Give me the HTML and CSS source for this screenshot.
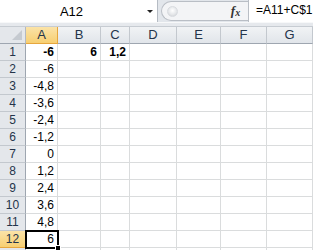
FILE: index.html
```html
<!DOCTYPE html>
<html lang="en">
<head>
  <meta charset="UTF-8" />
  <title>Sheet</title>
  <link rel="stylesheet" href="styles.css">
</head>
<body>
  <div class="topbar">
    <div class="namebox">
      <span class="name">A12</span>
      <span class="arrow"></span>
    </div>
    <div class="pill">
      <span class="knob"></span>
      <span class="fx"><i>f</i><i class="x">x</i></span>
    </div>
    <div class="formula">=A11+C$1</div>
  </div>
  <div class="strip"></div>

  <div class="sheet">
    <div class="corner"><span class="tri"></span></div>
    <div class="colhead sel">A</div>
    <div class="colhead">B</div>
    <div class="colhead">C</div>
    <div class="colhead">D</div>
    <div class="colhead">E</div>
    <div class="colhead">F</div>
    <div class="colhead">G</div>

    <div class="rowhead">1</div>
    <div class="cell bold">-6</div><div class="cell bold">6</div><div class="cell bold">1,2</div>
    <div class="cell"></div><div class="cell"></div><div class="cell"></div><div class="cell"></div>

    <div class="rowhead">2</div>
    <div class="cell">-6</div><div class="cell"></div><div class="cell"></div>
    <div class="cell"></div><div class="cell"></div><div class="cell"></div><div class="cell"></div>

    <div class="rowhead">3</div>
    <div class="cell">-4,8</div><div class="cell"></div><div class="cell"></div>
    <div class="cell"></div><div class="cell"></div><div class="cell"></div><div class="cell"></div>

    <div class="rowhead">4</div>
    <div class="cell">-3,6</div><div class="cell"></div><div class="cell"></div>
    <div class="cell"></div><div class="cell"></div><div class="cell"></div><div class="cell"></div>

    <div class="rowhead">5</div>
    <div class="cell">-2,4</div><div class="cell"></div><div class="cell"></div>
    <div class="cell"></div><div class="cell"></div><div class="cell"></div><div class="cell"></div>

    <div class="rowhead">6</div>
    <div class="cell">-1,2</div><div class="cell"></div><div class="cell"></div>
    <div class="cell"></div><div class="cell"></div><div class="cell"></div><div class="cell"></div>

    <div class="rowhead">7</div>
    <div class="cell">0</div><div class="cell"></div><div class="cell"></div>
    <div class="cell"></div><div class="cell"></div><div class="cell"></div><div class="cell"></div>

    <div class="rowhead">8</div>
    <div class="cell">1,2</div><div class="cell"></div><div class="cell"></div>
    <div class="cell"></div><div class="cell"></div><div class="cell"></div><div class="cell"></div>

    <div class="rowhead">9</div>
    <div class="cell">2,4</div><div class="cell"></div><div class="cell"></div>
    <div class="cell"></div><div class="cell"></div><div class="cell"></div><div class="cell"></div>

    <div class="rowhead">10</div>
    <div class="cell">3,6</div><div class="cell"></div><div class="cell"></div>
    <div class="cell"></div><div class="cell"></div><div class="cell"></div><div class="cell"></div>

    <div class="rowhead">11</div>
    <div class="cell">4,8</div><div class="cell"></div><div class="cell"></div>
    <div class="cell"></div><div class="cell"></div><div class="cell"></div><div class="cell"></div>

    <div class="rowhead sel">12</div>
    <div class="cell active">6<span class="handle"></span></div><div class="cell"></div><div class="cell"></div>
    <div class="cell"></div><div class="cell"></div><div class="cell"></div><div class="cell"></div>

    <div class="rowhead"></div>
    <div class="cell"></div><div class="cell"></div><div class="cell"></div>
    <div class="cell"></div><div class="cell"></div><div class="cell"></div><div class="cell"></div>
  </div>
</body>
</html>
```

FILE: styles.css
```css
* {
  box-sizing: border-box;
}
body {
  margin: 0;
  width: 313px;
  height: 250px;
  overflow: hidden;
  background: #ffffff;
  font-family: "Liberation Sans", Arial, sans-serif;
  color: #000000;
}

/* formula bar */
.topbar {
  display: flex;
  height: 22px;
  background: #e2e6eb;
}
.namebox {
  width: 158px;
  display: flex;
  align-items: center;
  background: #ffffff;
  border-right: 1px solid #b6bcc4;
}
.name {
  flex: 1;
  text-align: center;
  font-size: 13px;
  padding-right: 4px;
}
.arrow {
  width: 0;
  height: 0;
  margin-right: 4px;
  border-left: 3px solid transparent;
  border-right: 3px solid transparent;
  border-top: 3px solid #222222;
}
.pill {
  width: 87px;
  margin: 1px 0 0 3px;
  height: 20px;
  display: flex;
  align-items: center;
  justify-content: space-between;
  background: #f3f4f6;
  border: 1px solid #b9bec5;
  border-right: none;
  border-radius: 10px 0 0 10px;
}
.knob {
  width: 11px;
  height: 11px;
  margin-left: 5px;
  border-radius: 50%;
  background: radial-gradient(circle at 50% 40%, #ffffff 0, #e3e5e8 60%, #c9ccd1 100%);
  border: 1px solid #d8dbdf;
}
.fx {
  width: 25px;
  height: 19px;
  display: flex;
  align-items: center;
  justify-content: center;
  font-family: "Liberation Serif", serif;
  font-size: 13px;
  font-weight: bold;
  color: #333333;
}
.fx .x {
  font-size: 10px;
  margin-top: 3px;
}
.formula {
  flex: 1;
  background: #ffffff;
  border-left: 1px solid #b9bec5;
  font-size: 12px;
  line-height: 21px;
  padding-left: 7px;
  white-space: nowrap;
}
.strip {
  height: 5px;
  background: #e6e9ed;
  border-top: 1px solid #f7f8f9;
  border-bottom: 1px solid #c7ccd2;
}

/* grid */
.sheet {
  display: grid;
  grid-template-columns: 26px 32px 43px 29px 47px 44px 46px 46px;
  grid-auto-rows: 17px;
}
.corner {
  background: #e4e7eb;
  border-right: 1px solid #b3b9c1;
  border-bottom: 1px solid #9ea6b0;
  position: relative;
}
.tri {
  position: absolute;
  right: 3px;
  bottom: 3px;
  width: 0;
  height: 0;
  border-left: 10px solid transparent;
  border-bottom: 10px solid #c5cad0;
}
.colhead {
  background: linear-gradient(#f1f3f5, #e1e5ea);
  border-right: 1px solid #c3c8ce;
  border-bottom: 1px solid #9ea6b0;
  text-align: center;
  font-size: 13px;
  line-height: 16px;
  color: #24344a;
}
.rowhead {
  background: #e4e7eb;
  border-right: 1px solid #9ea6b0;
  border-bottom: 1px solid #c3c8ce;
  text-align: center;
  font-size: 12px;
  line-height: 17px;
  color: #24344a;
}
.colhead.sel,
.rowhead.sel {
  background: linear-gradient(#fbe3a8, #f7cf72);
  border-color: #e6a63d;
}
.cell {
  border-right: 1px solid #dadcdd;
  border-bottom: 1px solid #dadcdd;
  text-align: right;
  padding-right: 3px;
  font-size: 12px;
  line-height: 17px;
  white-space: nowrap;
}
.bold {
  font-weight: bold;
}
.active {
  position: relative;
  outline: 2px solid #000000;
  outline-offset: -1px;
}
.handle {
  position: absolute;
  right: -4px;
  bottom: -4px;
  width: 6px;
  height: 6px;
  background: #000000;
  border: 1px solid #ffffff;
}
```
